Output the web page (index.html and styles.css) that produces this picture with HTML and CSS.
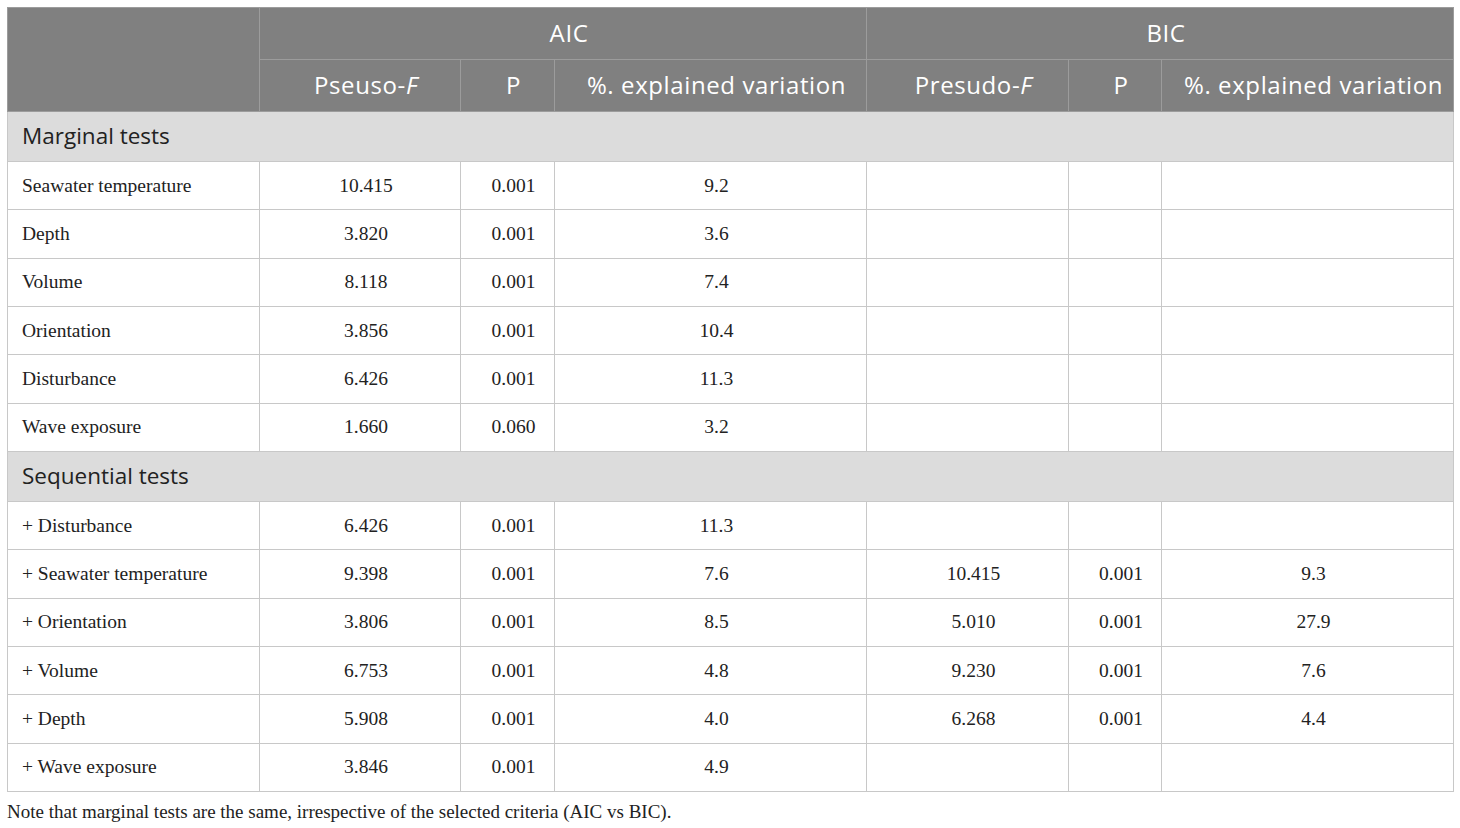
FILE: index.html
```html
<!DOCTYPE html>
<html lang="en">
<head>
    <meta charset="UTF-8">
    <title>Marginal and sequential tests</title>
    <link rel="stylesheet" href="styles.css">
</head>
<body>

    <table class="results">
        <colgroup>
            <col class="c-label">
            <col class="c-f">
            <col class="c-p">
            <col class="c-var">
            <col class="c-f2">
            <col class="c-p2">
            <col class="c-var2">
        </colgroup>
        <thead>
            <tr class="head-top">
                <th rowspan="2"></th>
                <th colspan="3">AIC</th>
                <th colspan="3">BIC</th>
            </tr>
            <tr class="head-sub">
                <th>Pseuso-<i>F</i></th>
                <th>P</th>
                <th>%. explained variation</th>
                <th>Presudo-<i>F</i></th>
                <th>P</th>
                <th>%. explained variation</th>
            </tr>
        </thead>
        <tbody>
            <tr class="section"><td colspan="7">Marginal tests</td></tr>
            <tr><td>Seawater temperature</td><td>10.415</td><td>0.001</td><td>9.2</td><td></td><td></td><td></td></tr>
            <tr><td>Depth</td><td>3.820</td><td>0.001</td><td>3.6</td><td></td><td></td><td></td></tr>
            <tr><td>Volume</td><td>8.118</td><td>0.001</td><td>7.4</td><td></td><td></td><td></td></tr>
            <tr><td>Orientation</td><td>3.856</td><td>0.001</td><td>10.4</td><td></td><td></td><td></td></tr>
            <tr><td>Disturbance</td><td>6.426</td><td>0.001</td><td>11.3</td><td></td><td></td><td></td></tr>
            <tr><td>Wave exposure</td><td>1.660</td><td>0.060</td><td>3.2</td><td></td><td></td><td></td></tr>
            <tr class="section"><td colspan="7">Sequential tests</td></tr>
            <tr><td>+ Disturbance</td><td>6.426</td><td>0.001</td><td>11.3</td><td></td><td></td><td></td></tr>
            <tr><td>+ Seawater temperature</td><td>9.398</td><td>0.001</td><td>7.6</td><td>10.415</td><td>0.001</td><td>9.3</td></tr>
            <tr><td>+ Orientation</td><td>3.806</td><td>0.001</td><td>8.5</td><td>5.010</td><td>0.001</td><td>27.9</td></tr>
            <tr><td>+ Volume</td><td>6.753</td><td>0.001</td><td>4.8</td><td>9.230</td><td>0.001</td><td>7.6</td></tr>
            <tr><td>+ Depth</td><td>5.908</td><td>0.001</td><td>4.0</td><td>6.268</td><td>0.001</td><td>4.4</td></tr>
            <tr><td>+ Wave exposure</td><td>3.846</td><td>0.001</td><td>4.9</td><td></td><td></td><td></td></tr>
        </tbody>
    </table>

    <p class="note">Note that marginal tests are the same, irrespective of the selected criteria (AIC vs BIC).</p>

</body>
</html>
```

FILE: styles.css
```css
body {
    margin: 0;
    padding: 7px;
    background-color: #fff;
    color: #222;
    font-family: "Liberation Serif", "Times New Roman", serif;
}
.results {
    border-collapse: collapse;
    table-layout: fixed;
    width: 1446px;
    border: 1px solid #c4c4c4;
}
.c-label { width: 252px; }
.c-f { width: 201px; }
.c-p { width: 94px; }
.c-var { width: 312px; }
.c-f2 { width: 202px; }
.c-p2 { width: 93px; }
.c-var2 { width: 292px; }
.results th {
    background-color: #808080;
    color: #fff;
    font-family: "Open Sans", "Noto Sans", sans-serif;
    font-weight: normal;
    font-size: 24px;
    letter-spacing: 0.6px;
    text-align: center;
    border: 1px solid #9c9c9c;
    padding: 0 2px 2px 14px;
}
.results th i {
    font-style: italic;
}
.head-top th {
    height: 49px;
}
.head-sub th {
    height: 49px;
}
.results td {
    height: 47.33px;
    padding: 0 2px 0 14px;
    border: 1px solid #c8c8c8;
    font-size: 19.5px;
    text-align: center;
}
.results td:first-child {
    text-align: left;
}
.section td {
    height: 47px;
    background-color: #dcdcdc;
    font-family: "Open Sans", "Noto Sans", sans-serif;
    font-size: 22.5px;
    padding-bottom: 2px;
    color: #222;
}
.note {
    margin: 9px 0 0;
    font-size: 19px;
    color: #222;
}
```
